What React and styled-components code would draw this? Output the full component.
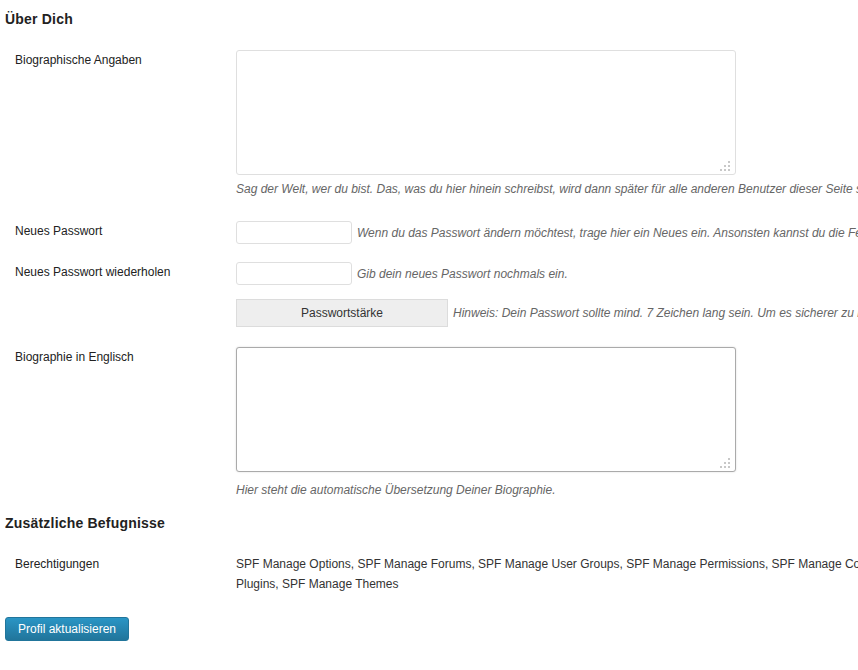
import styled, { createGlobalStyle } from "styled-components";

const GlobalStyle = createGlobalStyle`
  html, body {
    margin: 0;
    padding: 0;
    background: #fff;
    overflow: hidden;
  }
  body {
    font-family: "Liberation Sans", Arial, sans-serif;
    font-size: 12px;
    color: #333;
  }
`;

const Page = styled.div`
  width: 1200px;
  padding: 9px 0 0 5px;
`;

const SectionTitle = styled.h3`
  margin: ${(p) => p.$top || 0}px 0 0;
  font-size: 14px;
  line-height: 20px;
  font-weight: bold;
  color: #222;
  letter-spacing: 0.2px;
`;

const Row = styled.div`
  display: grid;
  grid-template-columns: 231px 1fr;
  margin-top: ${(p) => p.$top || 0}px;
`;

const Label = styled.label`
  padding-left: 10px;
  line-height: 21px;
  color: #222;
`;

const Field = styled.div`
  display: flex;
  flex-direction: column;
  align-items: flex-start;
`;

const Inline = styled.div`
  display: flex;
  align-items: center;
  gap: 5px;
`;

const AreaWrap = styled.div`
  position: relative;
  width: 500px;
  height: 125px;
`;

const Area = styled.textarea`
  box-sizing: border-box;
  width: 500px;
  height: 125px;
  margin: 0;
  resize: none;
  border: 1px solid ${(p) => (p.$focus ? "#aaa" : "#dfdfdf")};
  border-radius: 3px;
  box-shadow: ${(p) => (p.$focus ? "0 0 2px rgba(0,0,0,0.15)" : "none")};
  background: #fff;
  outline: none;
  font-family: inherit;
`;

const Grip = styled.svg`
  position: absolute;
  right: 6px;
  bottom: 4px;
`;

const Input = styled.input`
  box-sizing: border-box;
  width: 116px;
  height: 23px;
  margin: 0;
  border: 1px solid #dfdfdf;
  border-radius: 3px;
  background: #fff;
  outline: none;
`;

const Strength = styled.div`
  box-sizing: border-box;
  width: 212px;
  height: 28px;
  border: 1px solid #dcdcdc;
  background: #eee;
  color: #333;
  display: flex;
  align-items: center;
  justify-content: center;
`;

const Desc = styled.span`
  font-style: italic;
  color: #666;
  white-space: nowrap;
  line-height: 16px;
  margin-top: ${(p) => p.$top || 0}px;
`;

const Caps = styled.div`
  line-height: 20px;
  color: #333;
  white-space: nowrap;
`;

const Submit = styled.button`
  margin-top: 23px;
  height: 24px;
  padding: 0 12px;
  border: 1px solid #21759b;
  border-radius: 3px;
  background: linear-gradient(to bottom, #2a95c5, #21759b);
  color: #fff;
  font-family: inherit;
  font-size: 12px;
  line-height: 22px;
  cursor: pointer;
`;

function ResizeGrip() {
  const dots = [
    [8, 0],
    [4, 4],
    [8, 4],
    [0, 8],
    [4, 8],
    [8, 8],
  ];
  return (
    <Grip width="10" height="10" viewBox="0 0 10 10">
      {dots.map(([x, y]) => (
        <rect key={`${x}-${y}`} x={x} y={y} width="2" height="2" fill="#c8c8c8" />
      ))}
    </Grip>
  );
}

function BioArea({ focus }) {
  return (
    <AreaWrap>
      <Area $focus={focus} />
      <ResizeGrip />
    </AreaWrap>
  );
}

export default function App() {
  return (
    <Page>
      <GlobalStyle />
      <SectionTitle>Über Dich</SectionTitle>

      <Row $top={21}>
        <Label>Biographische Angaben</Label>
        <Field>
          <BioArea />
          <Desc $top={6}>
            Sag der Welt, wer du bist. Das, was du hier hinein schreibst, wird dann später für alle anderen
            Benutzer dieser Seite sichtbar sein.
          </Desc>
        </Field>
      </Row>

      <Row $top={24}>
        <Label>Neues Passwort</Label>
        <Inline>
          <Input type="password" />
          <Desc>
            Wenn du das Passwort ändern möchtest, trage hier ein Neues ein. Ansonsten kannst du die Felder leer lassen.
          </Desc>
        </Inline>
      </Row>

      <Row $top={18}>
        <Label>Neues Passwort wiederholen</Label>
        <Inline>
          <Input type="password" />
          <Desc>Gib dein neues Passwort nochmals ein.</Desc>
        </Inline>
      </Row>

      <Row $top={14}>
        <span />
        <Inline>
          <Strength>Passwortstärke</Strength>
          <Desc>
            Hinweis: Dein Passwort sollte mind. 7 Zeichen lang sein. Um es sicherer zu machen, verwende Groß- und
            Kleinbuchstaben, Zahlen und Sonderzeichen.
          </Desc>
        </Inline>
      </Row>

      <Row $top={20}>
        <Label>Biographie in Englisch</Label>
        <Field>
          <BioArea focus />
          <Desc $top={10}>Hier steht die automatische Übersetzung Deiner Biographie.</Desc>
        </Field>
      </Row>

      <SectionTitle $top={15}>Zusätzliche Befugnisse</SectionTitle>

      <Row $top={21}>
        <Label>Berechtigungen</Label>
        <Caps>
          SPF Manage Options, SPF Manage Forums, SPF Manage User Groups, SPF Manage Permissions, SPF Manage
          Components, SPF Manage Admins, SPF Manage Users, SPF Manage Profiles, SPF Manage Toolbox, SPF Manage
          <br />
          Plugins, SPF Manage Themes
        </Caps>
      </Row>

      <Submit type="submit">Profil aktualisieren</Submit>
    </Page>
  );
}
